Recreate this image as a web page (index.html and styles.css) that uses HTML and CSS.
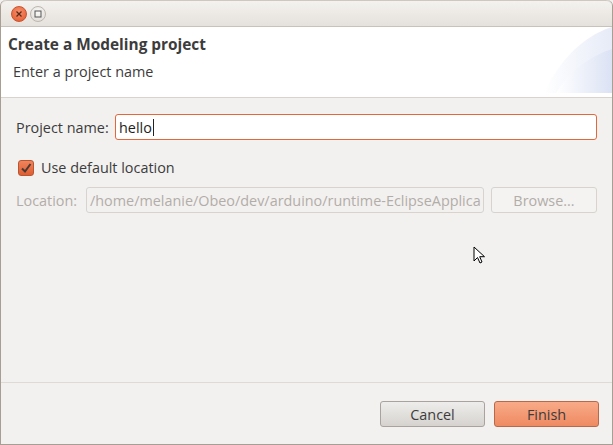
FILE: index.html
```html
<!DOCTYPE html>
<html>
<head>
<meta charset="utf-8">
<link rel="stylesheet" href="styles.css">
</head>
<body>
<div class="window">
  <div class="titlebar">
    <span class="wbtn close">
      <svg width="8" height="8" viewBox="0 0 8 8"><path d="M1.5 1.5L6.5 6.5M6.5 1.5L1.5 6.5" stroke="#5a2a18" stroke-width="1.3"/></svg>
    </span>
    <span class="wbtn max">
      <svg width="8" height="8" viewBox="0 0 8 8"><rect x="1" y="1" width="6" height="6" fill="none" stroke="#555" stroke-width="1"/></svg>
    </span>
  </div>
  <div class="header">
    <div class="header-text">
      <div class="h-title">Create a Modeling project</div>
      <div class="h-sub">Enter a project name</div>
    </div>
    <svg class="banner" width="68" height="66" viewBox="0 0 68 66">
      <defs>
        <linearGradient id="g1" x1="0" y1="0" x2="1" y2="0">
          <stop offset="0" stop-color="#ffffff"/>
          <stop offset="1" stop-color="#e6ebf7"/>
        </linearGradient>
        <linearGradient id="g2" x1="0" y1="0" x2="1" y2="0">
          <stop offset="0" stop-color="#ffffff"/>
          <stop offset="1" stop-color="#dbe2f4"/>
        </linearGradient>
      </defs>
      <path d="M0 66 C 12 40, 35 10, 68 0 L68 66 Z" fill="url(#g1)"/>
      <path d="M12 66 C 24 45, 44 30, 68 22 L68 66 Z" fill="url(#g2)"/>
    </svg>
  </div>
  <div class="body">
    <div class="row name-row">
      <label class="lbl">Project name:</label>
      <div class="input active">hello<span class="caret"></span></div>
    </div>
    <div class="row check-row">
      <span class="check">
        <svg width="12" height="12" viewBox="0 0 12 12"><path d="M2 6.5L5 9.5L10.5 2" fill="none" stroke="#4a3a34" stroke-width="2"/></svg>
      </span>
      <span class="check-lbl">Use default location</span>
    </div>
    <div class="row loc-row">
      <label class="lbl disabled">Location:</label>
      <div class="input disabled-input">/home/melanie/Obeo/dev/arduino/runtime-EclipseApplica</div>
      <div class="btn browse">Browse...</div>
    </div>
  </div>
  <div class="footer">
    <div class="btn cancel">Cancel</div>
    <div class="btn finish">Finish</div>
  </div>
  <svg class="cursor" width="14" height="20" viewBox="0 0 14 20">
    <path d="M1 1 L1 15 L4.5 11.5 L7 17 L9 16 L6.7 10.7 L11.5 10.7 Z" fill="#fff" stroke="#000" stroke-width="1" stroke-linejoin="round"/>
  </svg>
</div>
</body>
</html>
```
FILE: styles.css
```css
* { box-sizing: border-box; }
html, body { margin: 0; padding: 0; }
body {
  width: 613px;
  height: 445px;
  overflow: hidden;
  font-family: "Open Sans", "DejaVu Sans", sans-serif;
  font-size: 14.4px;
  color: #3c3c3c;
  background: #f2f1f0;
}
.window {
  position: relative;
  width: 613px;
  height: 445px;
  border-left: 1px solid #a99e94;
  border-right: 1px solid #a99e94;
  border-bottom: 1px solid #a99e94;
  border-radius: 6px 6px 0 0;
  background: #f2f1f0;
  display: flex;
  flex-direction: column;
}
.titlebar {
  height: 27px;
  flex: none;
  display: flex;
  align-items: center;
  gap: 3px;
  padding-left: 10px;
  background: linear-gradient(#f4f2ef, #e5e1dc);
  border-top: 1px solid #cfc8c1;
  border-radius: 6px 6px 0 0;
  border-bottom: 1px solid #c9c2ba;
}
.wbtn {
  width: 16px;
  height: 16px;
  border-radius: 50%;
  display: flex;
  align-items: center;
  justify-content: center;
}
.close {
  background: radial-gradient(circle at 50% 35%, #f7906c, #e2582d);
  border: 1px solid #c9532d;
}
.max {
  background: radial-gradient(circle at 50% 35%, #fafaf8, #dcd8d3);
  border: 1px solid #bdb6ae;
}
.header {
  height: 71px;
  flex: none;
  background: #ffffff;
  border-bottom: 1px solid #d8d3cd;
  display: flex;
  justify-content: space-between;
  align-items: flex-start;
}
.header-text { padding: 8px 0 0 7px; }
.h-title {
  font-weight: bold;
  font-size: 15.4px;
  color: #3c3c3c;
  line-height: 20px;
}
.h-sub {
  padding-left: 5px;
  margin-top: 7px;
  line-height: 20px;
}
.banner { margin-top: 0; margin-right: 0; flex: none; }
.body {
  flex: 1;
  padding: 16px 15px 0 15px;
  display: flex;
  flex-direction: column;
}
.row { display: flex; align-items: center; }
.lbl { width: 99px; flex: none; white-space: nowrap; }
.lbl.disabled { width: 70px; color: #b2ada8; }
.input {
  flex: 1;
  min-width: 0;
  height: 26px;
  border: 1px solid #c6c0b9;
  border-radius: 3px;
  background: #fff;
  padding: 0 0 0 3px;
  display: flex;
  align-items: center;
  white-space: nowrap;
  overflow: hidden;
}
.input.active { border-color: #e2683c; color: #1e1e1e; }
.caret {
  display: inline-block;
  width: 1px;
  height: 17px;
  background: #222;
  margin-left: 1px;
}
.disabled-input {
  background: #f2f1f0;
  color: #b2ada8;
  border-color: #d8d3cd;
}
.check-row { margin-top: 18px; padding-left: 2px; gap: 7px; }
.check {
  width: 16px;
  height: 16px;
  border-radius: 3px;
  background: linear-gradient(#f0845c, #df5e32);
  border: 1px solid #b85632;
  display: flex;
  align-items: center;
  justify-content: center;
}
.loc-row { margin-top: 10px; gap: 0; }
.btn {
  height: 26px;
  border-radius: 3px;
  display: flex;
  align-items: center;
  justify-content: center;
  flex: none;
}
.browse {
  width: 106px;
  margin-left: 7px;
  border: 1px solid #d8d3cd;
  color: #b2ada8;
  background: #f4f3f2;
}
.footer {
  flex: none;
  height: 62px;
  border-top: 1px solid #dedad6;
  display: flex;
  justify-content: flex-end;
  align-items: flex-start;
  gap: 9px;
  padding: 18px 13px 0 0;
}
.cancel {
  width: 105px;
  border: 1px solid #a8a39e;
  background: linear-gradient(#eeedeb, #d6d3cf);
  color: #3c3c3c;
}
.finish {
  width: 105px;
  border: 1px solid #b8694a;
  background: linear-gradient(#f8aa88, #ef8a62);
  color: #3c3c3c;
}
.cursor { position: absolute; left: 472px; top: 246px; }
```
